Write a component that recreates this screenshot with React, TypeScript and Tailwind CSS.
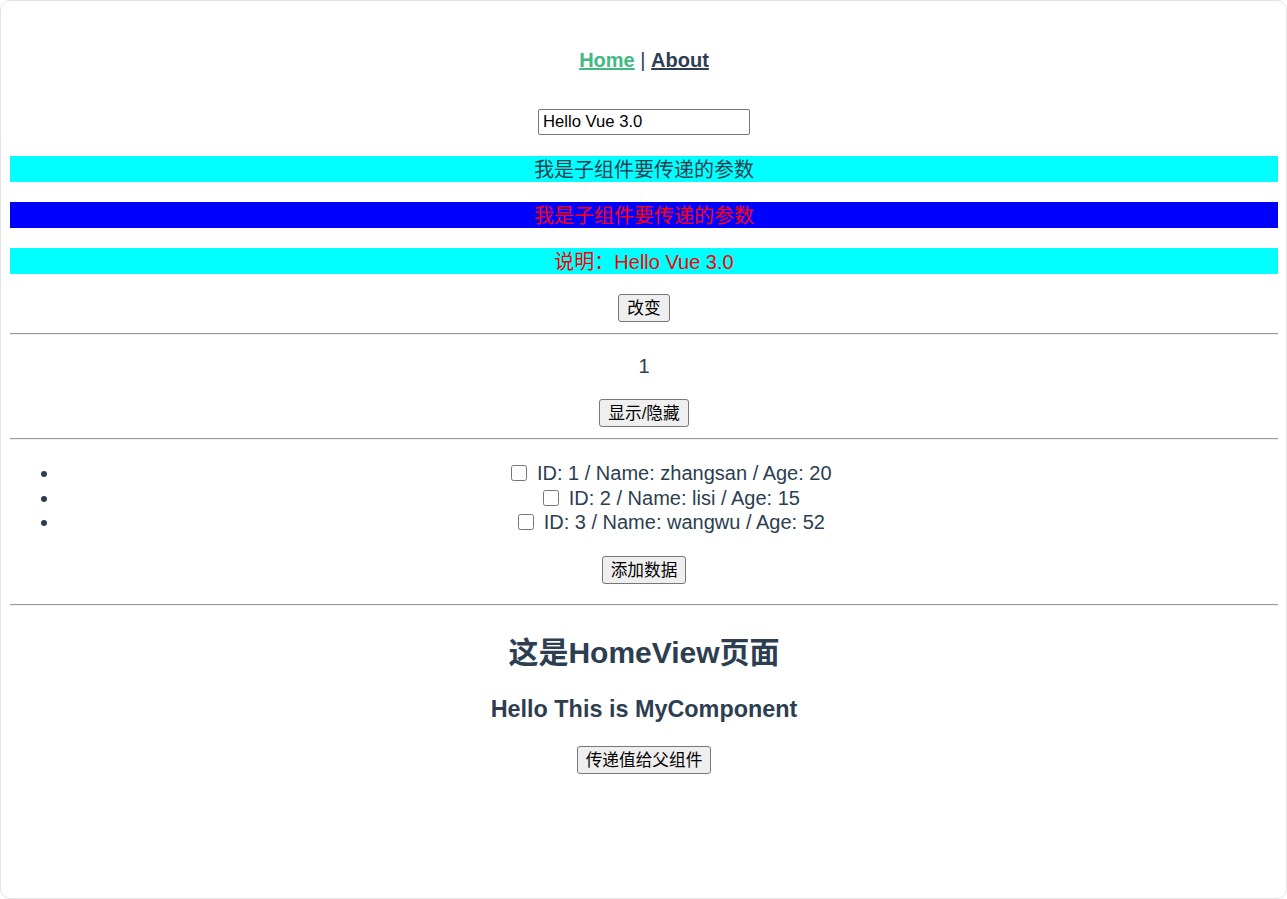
import React from "react";

const font = { fontFamily: '"Liberation Sans", "Noto Sans CJK SC", sans-serif' };

function Btn({ children }: { children: React.ReactNode }) {
  return (
    <button className="h-[28px] px-[8px] text-[16.67px] leading-[28px] text-black bg-[#efefef] border border-[#767676] rounded-[3px] align-top">
      {children}
    </button>
  );
}

function Hr({ mt }: { mt: string }) {
  return <div className={`${mt} h-[2px] border-t border-t-[#9a9a9a] border-b border-b-[#eeeeee]`} />;
}

const users = [
  { id: 1, name: "zhangsan", age: 20 },
  { id: 2, name: "lisi", age: 15 },
  { id: 3, name: "wangwu", age: 52 },
];

export default function App() {
  return (
    <div
      className="h-[899px] w-full box-border border border-[#e4e4e4] rounded-[10px] overflow-hidden bg-white pt-[9px] pl-[9px] pr-[8px] text-[#2c3e50] text-center text-[20px]"
      style={font}
    >
      <nav className="pt-[39px] pb-[37px] leading-[23px]">
        <a className="font-bold underline text-[#42b983]">Home</a>
        <span> | </span>
        <a className="font-bold underline text-[#2c3e50]">About</a>
      </nav>
      <div className="h-[27px]">
        <input
          defaultValue="Hello Vue 3.0"
          className="w-[212px] h-[26px] px-[4px] text-[16.67px] text-black border border-[#767676] rounded-[2px] bg-white align-top"
        />
      </div>
      <p className="mt-[20px] h-[26px] leading-[29px] bg-[#00ffff] text-[#2c3e50]">我是子组件要传递的参数</p>
      <p className="mt-[20px] h-[26px] leading-[29px] bg-[#0000ff] text-[#ff0000]">我是子组件要传递的参数</p>
      <p className="mt-[20px] h-[26px] leading-[28px] bg-[#00ffff] text-[#ff0000]">说明：Hello Vue 3.0</p>
      <div className="mt-[20px] h-[29px]">
        <Btn>改变</Btn>
      </div>
      <Hr mt="mt-[10px]" />
      <p className="mt-[20px] leading-[23px]">1</p>
      <div className="mt-[20px] h-[30px] pt-[1px]">
        <Btn>显示/隐藏</Btn>
      </div>
      <Hr mt="mt-[10px]" />
      <ul className="mt-[20px] list-disc pl-[50px]">
        {users.map((u) => (
          <li key={u.id} className="h-[24.5px] leading-[26px]">
            <input
              type="checkbox"
              className="w-[16px] h-[16px] ml-[5px] mr-[4px] align-[-1px]"
            />{" "}
            ID: {u.id} / Name: {u.name} / Age: {u.age}
          </li>
        ))}
      </ul>
      <div className="mt-[20px] h-[30px] pt-[2px]">
        <Btn>添加数据</Btn>
      </div>
      <Hr mt="mt-[20px]" />
      <h2 className="mt-[27px] h-[40px] leading-[40px] text-[30px] font-bold">这是HomeView页面</h2>
      <h3 className="mt-[23px] h-[27px] leading-[27px] text-[23.4px] font-bold">Hello This is MyComponent</h3>
      <div className="mt-[23px]">
        <Btn>传递值给父组件</Btn>
      </div>
    </div>
  );
}
